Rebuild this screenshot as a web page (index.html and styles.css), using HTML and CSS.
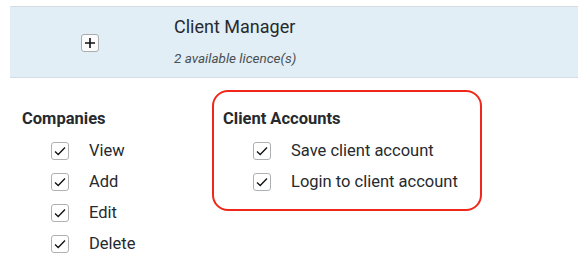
FILE: index.html
```html
<!DOCTYPE html>
<html lang="en">
<head>
  <meta charset="UTF-8" />
  <title>Client Manager</title>
  <link rel="stylesheet" href="styles.css">
</head>
<body>

  <div class="product-row">
    <div class="toggle-cell">
      <button class="toggle-btn">
        <svg width="12" height="12" viewBox="0 0 12 12"><path d="M6 1v10M1 6h10" stroke="#111" stroke-width="1.6" fill="none"/></svg>
      </button>
    </div>
    <div class="product-info">
      <div class="product-name">Client Manager</div>
      <div class="licence-count">2 available licence(s)</div>
    </div>
  </div>

  <div class="perm-groups">
    <div class="perm-group">
      <div class="group-title">Companies</div>
      <label class="perm"><span class="check"><svg width="12" height="10" viewBox="0 0 12 10"><path d="M1 5.5l3.2 3L11 1.5" stroke="#111" stroke-width="1.3" fill="none"/></svg></span>View</label>
      <label class="perm"><span class="check"><svg width="12" height="10" viewBox="0 0 12 10"><path d="M1 5.5l3.2 3L11 1.5" stroke="#111" stroke-width="1.3" fill="none"/></svg></span>Add</label>
      <label class="perm"><span class="check"><svg width="12" height="10" viewBox="0 0 12 10"><path d="M1 5.5l3.2 3L11 1.5" stroke="#111" stroke-width="1.3" fill="none"/></svg></span>Edit</label>
      <label class="perm"><span class="check"><svg width="12" height="10" viewBox="0 0 12 10"><path d="M1 5.5l3.2 3L11 1.5" stroke="#111" stroke-width="1.3" fill="none"/></svg></span>Delete</label>
    </div>

    <div class="perm-group highlight">
      <div class="group-title">Client Accounts</div>
      <label class="perm"><span class="check"><svg width="12" height="10" viewBox="0 0 12 10"><path d="M1 5.5l3.2 3L11 1.5" stroke="#111" stroke-width="1.3" fill="none"/></svg></span>Save client account</label>
      <label class="perm"><span class="check"><svg width="12" height="10" viewBox="0 0 12 10"><path d="M1 5.5l3.2 3L11 1.5" stroke="#111" stroke-width="1.3" fill="none"/></svg></span>Login to client account</label>
    </div>
  </div>

</body>
</html>
```

FILE: styles.css
```css
* { margin: 0; padding: 0; box-sizing: border-box; }

body {
  font-family: Roboto, 'Liberation Sans', sans-serif;
  color: #262a2e;
  background: #fff;
  padding-top: 6px;
}

.product-row {
  display: flex;
  margin-left: 10px;
  height: 72px;
  background: #e1eef6;
  border-top: 1px solid #d3dde3;
  border-bottom: 1px solid #d3dde3;
}

.toggle-cell {
  width: 160px;
  display: flex; align-items: center; justify-content: center;
  padding-top: 2px;
}

.toggle-btn {
  width: 18px; height: 18px;
  background: #fbfbfb;
  border: 1px solid #a9adb0; border-radius: 3px;
  display: flex; align-items: center; justify-content: center;
}

.product-info { padding: 9px 0 0 4px; }

.product-name { font-size: 18px; line-height: 22px; }

.licence-count {
  margin-top: 12px;
  font-size: 13.5px; font-style: italic;
  color: #4a4e52;
}

.perm-groups {
  display: flex;
  align-items: flex-start;
  margin-top: 12px;
  padding-left: 12px;
}

.perm-group {
  width: 200px;
  padding: 19px 10px 10px 10px;
}

.perm-group.highlight {
  width: 270px;
  border: 2px solid #f0281c;
  border-radius: 16px;
  padding: 17px 8px 12px 9px;
}

.group-title {
  font-size: 16.5px; font-weight: bold;
  line-height: 20px;
  margin-bottom: 6px;
}

.perm {
  display: flex; align-items: center;
  height: 31px;
  padding-left: 29px;
  font-size: 16.5px;
}

.highlight .perm { padding-left: 30px; }

.check {
  width: 18px; height: 18px;
  border: 1px solid #adb1b4; border-radius: 3px;
  display: flex; align-items: center; justify-content: center;
  padding-top: 1px;
  margin-right: 20px;
}
```
